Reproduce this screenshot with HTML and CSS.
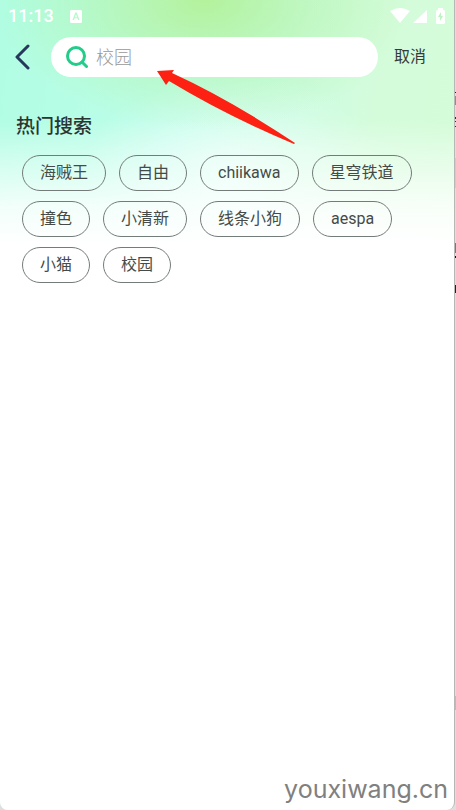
FILE: index.html
```
<!DOCTYPE html>
<html lang="zh-CN">
<head>
<meta charset="utf-8">
<meta name="viewport" content="width=device-width, initial-scale=1">
<title>热门搜索</title>
<link rel="stylesheet" href="styles.css">
</head>
<body>
<div class="desktop">
  <div class="screen">
    <div class="status">
      <span class="clock">11:13</span>
      <svg class="keyboard" width="12" height="13" viewBox="0 0 12 13" aria-hidden="true"><path fill="#fff" fill-rule="evenodd" d="M1 0h10l1 1v11l-1 1H1l-1-1V1zM5.3 2.5 2.5 10h1.4l.6-1.7h3l.6 1.7h1.4L6.7 2.5zM6 4.3l1 2.9H5z"/></svg>
      <svg class="signals" width="57" height="17" viewBox="0 0 57 17" aria-hidden="true">
        <path fill="#fff" d="M0 3Q10-3 20 3L10 15zM23 15 37 2v13zM48 2V0h5v2h1l1 1v12l-1 1h-7l-1-1V3l1-1z"/>
        <path fill="#bdf3c0" d="M51 4l-3 5h2v4l3-5h-2z"/>
      </svg>
    </div>
    <form class="searchbar">
      <button class="back" type="button" aria-label="返回"><svg width="16" height="26" viewBox="0 0 16 26"><path d="M13 2 2 13l11 11" fill="none" stroke="#253a5b" stroke-width="3" stroke-linecap="round" stroke-linejoin="round"/></svg></button>
      <label class="field">
        <svg width="22" height="22" viewBox="0 0 22 22" aria-hidden="true"><circle cx="10" cy="10" r="8.500" fill="none" stroke="#22cc89" stroke-width="3"/><path d="m16 16 4.500 4.500" stroke="#22cc89" stroke-width="3" stroke-linecap="round"/></svg>
        <input type="search" placeholder="校园" aria-label="搜索">
      </label>
      <button class="cancel" type="button">取消</button>
    </form>
    <main class="hot">
      <h1>热门搜索</h1>
      <div class="tags">
        <button type="button">海贼王</button>
        <button type="button">自由</button>
        <button type="button">chiikawa</button>
        <button type="button">星穹铁道</button>
        <button type="button">撞色</button>
        <button type="button">小清新</button>
        <button type="button">线条小狗</button>
        <button type="button">aespa</button>
        <button type="button">小猫</button>
        <button type="button">校园</button>
      </div>
    </main>
    <footer class="site">youxiwang.cn</footer>
    <svg class="arrow" width="140" height="76" viewBox="0 0 140 76" aria-hidden="true"><path fill="#fc2113" d="M0 1 17 0l-2 3Q72 29 138 73l-1 1Q70 46 12 11l-3 4z"/></svg>
  </div>
</div>
</body>
</html>
```
FILE: styles.css
```
* { box-sizing: border-box; }
body {
  margin: 0;
  font-family: Roboto, "Noto Sans CJK SC", sans-serif;
  color: #333b38;
}
button, input { font: inherit; color: inherit; }
button { padding: 0; border: 0; background: none; }
.desktop {
  min-height: 100vh;
  display: flex;
  padding-right: 1px;
  background:
    linear-gradient(#222, #222) right 92px / 1px 1px no-repeat,
    linear-gradient(#7890bb, #7890bb) right 96px / 1px 9px no-repeat,
    linear-gradient(#234, #234) right 117px / 1px 2px no-repeat,
    linear-gradient(#234, #234) right 121px / 1px 1px no-repeat,
    linear-gradient(#234, #234) right 126px / 1px 1px no-repeat,
    linear-gradient(#ccc, #ccc) right 158px / 1px 30px no-repeat,
    linear-gradient(#8d7468, #8d7468) right 243px / 1px 10px no-repeat,
    linear-gradient(#111, #111) right 256px / 1px 2px no-repeat,
    linear-gradient(#222, #222) right 285px / 1px 8px no-repeat,
    linear-gradient(#bbb, #bbb) right 696px / 1px 14px no-repeat,
    #dedede;
}
.screen {
  position: relative;
  flex: 1;
  display: flex;
  flex-direction: column;
  border-right: 1px solid #b5b8b5;
  border-radius: 0 0 8px 8px;
  background:
    linear-gradient(#fff0 120px, #ffffff70 165px, #ffffffd0 205px, #fff 245px),
    radial-gradient(ellipse 210px 130px at 205px 0, #b4f29c, #b4f29c80 45%, #b4f29c00),
    radial-gradient(ellipse 150px 90px at 235px 165px, #f2fffbb0, #f2fffb00),
    linear-gradient(100deg, #b0fde3 0%, #bffdea 35%, #d4fcdc 65%, #d4fdd4 100%);
}
.status {
  display: flex;
  align-items: center;
  height: 32px;
  padding: 0 7px 0 8px;
}
.clock {
  color: #fff;
  font-size: 18px;
  font-weight: 500;
  line-height: 20px;
}
.keyboard { margin-left: 16px; }
.signals { margin-left: auto; }
.searchbar {
  display: flex;
  align-items: center;
  margin: 5px 28px 0 15px;
}
.back { display: flex; margin-right: 20px; }
.field {
  flex: 1;
  display: flex;
  align-items: center;
  gap: 8px;
  min-width: 0;
  height: 40px;
  padding: 0 15px;
  border-radius: 20px;
  background: #fff;
}
.field svg { flex: none; }
.field input {
  flex: 1;
  min-width: 0;
  padding: 0;
  border: 0;
  outline: 0;
  background: none;
  font-size: 18px;
}
.field input::placeholder { color: #999; opacity: 1; font-weight: 300; }
.cancel { margin-left: 16px; font-size: 16px; line-height: 20px; }
.hot { flex: 1; padding: 36px 16px 0; }
.hot h1 {
  margin: 0;
  font-size: 19px;
  font-weight: 500;
  line-height: 28px;
  color: #2b3431;
}
.tags {
  display: flex;
  flex-wrap: wrap;
  gap: 10px 13px;
  margin: 14px 0 0 6px;
}
.tags button {
  height: 36px;
  padding: 0 17px;
  border: 1px solid #747c79;
  border-radius: 18px;
  font-size: 16px;
  line-height: 34px;
  color: #444b48;
}
.site {
  padding: 0 6px 4px 0;
  text-align: right;
  font-family: Inter, sans-serif;
  font-size: 25px;
  line-height: 34px;
  color: #808080;
}
.arrow { position: absolute; left: 157px; top: 70px; pointer-events: none; }
```
